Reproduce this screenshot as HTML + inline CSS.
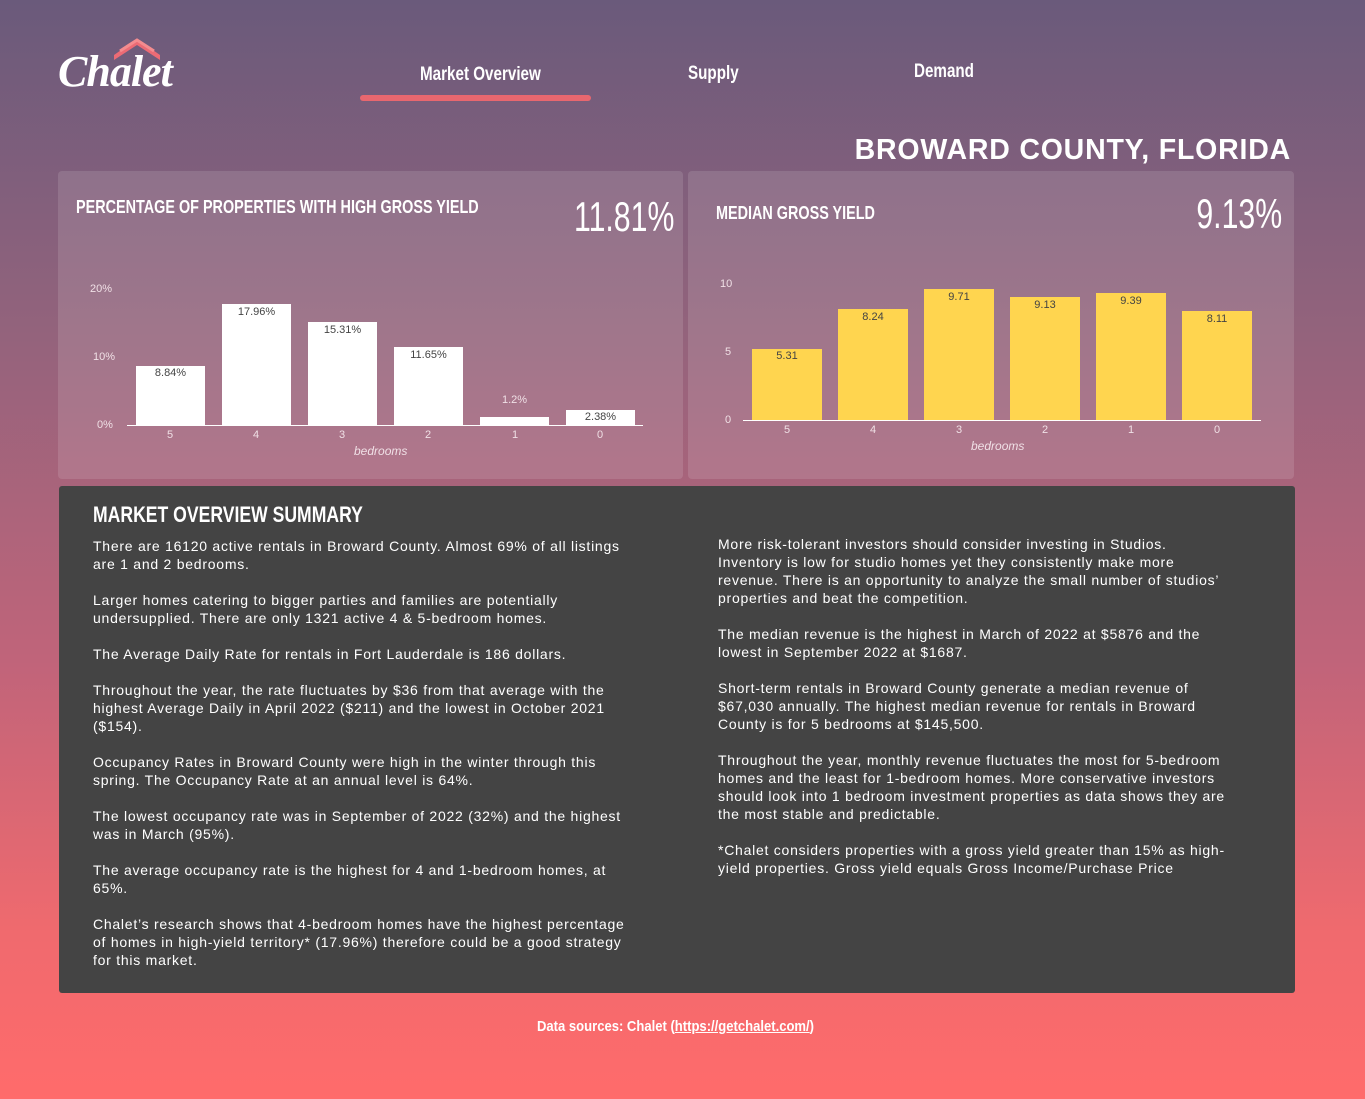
<!DOCTYPE html>
<html><head><meta charset="utf-8"><style>
*{margin:0;padding:0;box-sizing:border-box}
body{width:1365px;height:1099px;position:relative;overflow:hidden;font-family:"Liberation Sans",sans-serif;color:#fff;
background:linear-gradient(180deg,#6a5a7b 0%,#93637c 30%,#c0647a 60%,#f06a6e 85%,#ff6b6b 100%)}
.a{position:absolute}
.cond{font-family:"Liberation Sans",sans-serif;font-weight:bold;transform:scaleX(0.8);transform-origin:left top;white-space:nowrap}
.num{font-family:"Liberation Sans",sans-serif;transform:scaleX(0.72);transform-origin:right top;white-space:nowrap;text-align:right}
.card{position:absolute;background:rgba(255,255,255,0.12);border-radius:4px}
.bar{position:absolute;background:#fff}
.ybar{position:absolute;background:#ffd54f}
.lbl{position:absolute;font-size:11px;color:#444;text-align:center}
.ax{position:absolute;font-size:11px;color:#f0e0e6}
.sum p{font-size:14px;line-height:18px;margin-bottom:18px;color:#fff;letter-spacing:0.75px}
</style></head><body>
<div class="a" style="left:58px;top:46px;font-family:'Liberation Serif',serif;font-style:italic;font-weight:bold;font-size:44px;letter-spacing:-1px">Chalet</div>
<svg class="a" style="left:112px;top:37px" width="50" height="24"><path d="M2 18 L25 2 L48 18 L48 23 L25 8 L2 23Z" fill="#ec6b75"/><path d="M8 14 L25 3 L42 14" stroke="#f48c8f" stroke-width="3" fill="none"/></svg>
<div class="a cond" style="left:420px;top:64px;font-size:19px">Market Overview</div>
<div class="a" style="left:360px;top:95px;width:231px;height:6px;border-radius:3px;background:#e8676f"></div>
<div class="a cond" style="left:688px;top:63px;font-size:19px">Supply</div>
<div class="a cond" style="left:914px;top:61px;font-size:19px">Demand</div>
<div class="a" style="right:74px;top:134px;font-size:28.5px;font-weight:bold;letter-spacing:0.8px">BROWARD COUNTY, FLORIDA</div>

<div class="card" style="left:58px;top:171px;width:625px;height:308px"></div>
<div class="card" style="left:688px;top:171px;width:606px;height:308px"></div>
<div class="a cond" style="left:76px;top:197px;font-size:18px">PERCENTAGE OF PROPERTIES WITH HIGH GROSS YIELD</div>
<div class="a num" style="right:691px;top:193px;font-size:42px">11.81%</div>
<div class="a cond" style="left:716px;top:203px;font-size:18px">MEDIAN GROSS YIELD</div>
<div class="a num" style="right:83px;top:190px;font-size:42px">9.13%</div>

<div class="ax" style="left:90px;top:283px">20%</div>
<div class="ax" style="left:93px;top:351px">10%</div>
<div class="ax" style="left:97px;top:419px">0%</div>
<div class="a" style="left:127px;top:425px;width:516px;height:1px;background:#fff"></div>
<div class="bar" style="left:136px;top:366px;width:69px;height:59px"></div><div class="lbl" style="left:136px;top:367px;width:69px">8.84%</div>
<div class="bar" style="left:222px;top:304px;width:69px;height:121px"></div><div class="lbl" style="left:222px;top:306px;width:69px">17.96%</div>
<div class="bar" style="left:308px;top:322px;width:69px;height:103px"></div><div class="lbl" style="left:308px;top:324px;width:69px">15.31%</div>
<div class="bar" style="left:394px;top:347px;width:69px;height:78px"></div><div class="lbl" style="left:394px;top:349px;width:69px">11.65%</div>
<div class="bar" style="left:480px;top:417px;width:69px;height:8px"></div><div class="lbl" style="left:480px;top:394px;width:69px;color:#f0e0e6">1.2%</div>
<div class="bar" style="left:566px;top:410px;width:69px;height:15px"></div><div class="lbl" style="left:566px;top:411px;width:69px">2.38%</div>
<div class="ax" style="left:167px;top:429px">5</div><div class="ax" style="left:253px;top:429px">4</div><div class="ax" style="left:339px;top:429px">3</div><div class="ax" style="left:425px;top:429px">2</div><div class="ax" style="left:512px;top:429px">1</div><div class="ax" style="left:597px;top:429px">0</div>
<div class="ax" style="left:354px;top:444px;font-style:italic;font-size:12px">bedrooms</div>

<div class="ax" style="left:720px;top:278px">10</div>
<div class="ax" style="left:725px;top:346px">5</div>
<div class="ax" style="left:725px;top:414px">0</div>
<div class="a" style="left:743px;top:420px;width:518px;height:1px;background:#fff"></div>
<div class="ybar" style="left:752px;top:349px;width:70px;height:71px"></div><div class="lbl" style="left:752px;top:350px;width:70px">5.31</div>
<div class="ybar" style="left:838px;top:309px;width:70px;height:111px"></div><div class="lbl" style="left:838px;top:311px;width:70px">8.24</div>
<div class="ybar" style="left:924px;top:289px;width:70px;height:131px"></div><div class="lbl" style="left:924px;top:291px;width:70px">9.71</div>
<div class="ybar" style="left:1010px;top:297px;width:70px;height:123px"></div><div class="lbl" style="left:1010px;top:299px;width:70px">9.13</div>
<div class="ybar" style="left:1096px;top:293px;width:70px;height:127px"></div><div class="lbl" style="left:1096px;top:295px;width:70px">9.39</div>
<div class="ybar" style="left:1182px;top:311px;width:70px;height:109px"></div><div class="lbl" style="left:1182px;top:313px;width:70px">8.11</div>
<div class="ax" style="left:784px;top:424px">5</div><div class="ax" style="left:870px;top:424px">4</div><div class="ax" style="left:956px;top:424px">3</div><div class="ax" style="left:1042px;top:424px">2</div><div class="ax" style="left:1128px;top:424px">1</div><div class="ax" style="left:1214px;top:424px">0</div>
<div class="ax" style="left:971px;top:439px;font-style:italic;font-size:12px">bedrooms</div>

<div class="a" style="left:59px;top:486px;width:1236px;height:507px;background:#444;border-radius:3px"></div>
<div class="a cond" style="left:93px;top:502px;font-size:22px">MARKET OVERVIEW SUMMARY</div>
<div class="a sum" style="left:93px;top:537px;width:548px">
<p>There are 16120 active rentals in Broward County. Almost 69% of all listings are 1 and 2 bedrooms.</p>
<p>Larger homes catering to bigger parties and families are potentially undersupplied. There are only 1321 active 4 &amp; 5-bedroom homes.</p>
<p>The Average Daily Rate for rentals in Fort Lauderdale is 186 dollars.</p>
<p>Throughout the year, the rate fluctuates by $36 from that average with the highest Average Daily in April 2022 ($211) and the lowest in October 2021 ($154).</p>
<p>Occupancy Rates in Broward County were high in the winter through this spring. The Occupancy Rate at an annual level is 64%.</p>
<p>The lowest occupancy rate was in September of 2022 (32%) and the highest was in March (95%).</p>
<p>The average occupancy rate is the highest for 4 and 1-bedroom homes, at 65%.</p>
<p>Chalet’s research shows that 4-bedroom homes have the highest percentage of homes in high-yield territory* (17.96%) therefore could be a good strategy for this market.</p>
</div>
<div class="a sum" style="left:718px;top:535px;width:530px">
<p>More risk-tolerant investors should consider investing in Studios.<br>Inventory is low for studio homes yet they consistently make more<br>revenue. There is an opportunity to analyze the small number of studios’<br>properties and beat the competition.</p>
<p>The median revenue is the highest in March of 2022 at $5876 and the lowest in September 2022 at $1687.</p>
<p>Short-term rentals in Broward County generate a median revenue of $67,030 annually. The highest median revenue for rentals in Broward County is for 5 bedrooms at $145,500.</p>
<p>Throughout the year, monthly revenue fluctuates the most for 5-bedroom homes and the least for 1-bedroom homes. More conservative investors should look into 1 bedroom investment properties as data shows they are the most stable and predictable.</p>
<p>*Chalet considers properties with a gross yield greater than 15% as high-yield properties. Gross yield equals Gross Income/Purchase Price</p>
</div>
<div class="a cond" style="left:537px;top:1018px;font-size:15px;transform:scaleX(0.87)">Data sources: Chalet (<span style="text-decoration:underline">https://getchalet.com/</span>)</div>
</body></html>
